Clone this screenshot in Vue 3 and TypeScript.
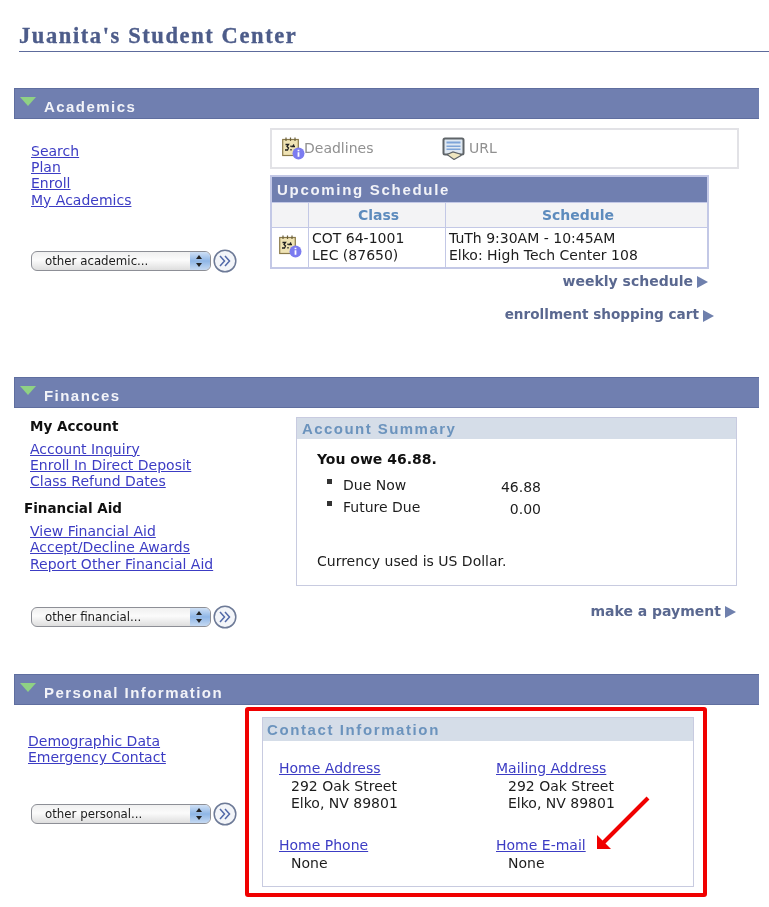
<script setup lang="ts">
const academicLinks: string[] = ['Search', 'Plan', 'Enroll', 'My Academics']
const accountLinks: string[] = ['Account Inquiry', 'Enroll In Direct Deposit', 'Class Refund Dates']
const aidLinks: string[] = ['View Financial Aid', 'Accept/Decline Awards', 'Report Other Financial Aid']
const personalLinks: string[] = ['Demographic Data', 'Emergency Contact']
</script>

<template>
  <div class="page">
    <svg class="defs" width="0" height="0" aria-hidden="true">
      <symbol id="cal" viewBox="0 0 23 23">
        <rect x="0.7" y="2.500" width="15.600" height="16" fill="#efe3b4" stroke="#8a7a4a" stroke-width="1.200" />
        <path d="M4 0.500v3.500M8.500 0.500v3.500M13 0.500v3.500" stroke="#6a5f3a" stroke-width="1.200" />
        <path d="M3.500 7.500h3l-1.500 2 1.500 1.500-1 2h-2.500M9 8.500v1.500M9 12v1.500M12 7.500l-1.500 2h2.500" fill="none" stroke="#222" stroke-width="1.300" />
        <circle cx="16.500" cy="16.500" r="6" fill="#7b7bf0" />
        <path d="M16.500 12.700v1.500M16.500 15.200v4.600" stroke="#fff" stroke-width="1.800" />
      </symbol>
      <symbol id="go" viewBox="0 0 24 24">
        <circle cx="12" cy="12" r="10.800" fill="#f3f5f9" stroke="#6d7a97" stroke-width="1.500" />
        <path d="M7 7l4.500 5-4.500 5M12 7l4.500 5-4.500 5" fill="none" stroke="#5269a8" stroke-width="1.500" />
      </symbol>
    </svg>

    <h1 class="title">Juanita's Student Center</h1>

    <section class="section academics">
      <h2 class="bar"><i class="tri"></i>Academics</h2>
      <div class="body">
        <div class="left">
          <nav class="links"><a v-for="l in academicLinks" :key="l" href="#">{{ l }}</a></nav>
          <div class="other">
            <span class="select"><span>other academic...</span><b class="stepper"></b></span>
            <svg class="go"><use href="#go" /></svg>
          </div>
        </div>
        <div class="right">
          <div class="tabs">
            <span class="tab deadlines"><svg class="cal"><use href="#cal" /></svg>Deadlines</span>
            <span class="tab url">
              <svg class="urlicon" viewBox="0 0 23 23">
                <rect x="1.500" y="1.500" width="20" height="16" rx="1.500" fill="#dfe8f2" stroke="#5f6468" stroke-width="2" />
                <path d="M4.500 4.500h14v2h-14zM4.500 8.500h14v1.500h-14zM4.500 11.500h14v1.500h-14z" fill="#7ea4d8" />
                <path d="M5 17.500l6-2.500 7 2 1 1.500-7 4z" fill="#efe6c0" stroke="#5f6468" stroke-width="1.200" />
              </svg>URL
            </span>
          </div>
          <div class="schedule">
            <div class="sched-title">Upcoming Schedule</div>
            <div class="row head">
              <span></span><span>Class</span><span>Schedule</span>
            </div>
            <div class="row data">
              <span class="iconcell"><svg class="cal"><use href="#cal" /></svg></span>
              <span>COT 64-1001<br />LEC (87650)</span>
              <span>TuTh 9:30AM - 10:45AM<br />Elko: High Tech Center 108</span>
            </div>
          </div>
          <a class="action weekly" href="#">weekly schedule<i class="play"></i></a>
          <a class="action cart" href="#">enrollment shopping cart<i class="play"></i></a>
        </div>
      </div>
    </section>

    <section class="section finances">
      <h2 class="bar"><i class="tri"></i>Finances</h2>
      <div class="body">
        <div class="left">
          <h3 class="sub first">My Account</h3>
          <nav class="links"><a v-for="l in accountLinks" :key="l" href="#">{{ l }}</a></nav>
          <h3 class="sub second">Financial Aid</h3>
          <nav class="links"><a v-for="l in aidLinks" :key="l" href="#">{{ l }}</a></nav>
          <div class="other">
            <span class="select"><span>other financial...</span><b class="stepper"></b></span>
            <svg class="go"><use href="#go" /></svg>
          </div>
        </div>
        <div class="right">
          <div class="card summary">
            <div class="card-head">Account Summary</div>
            <div class="summary-body">
              <strong>You owe 46.88.</strong>
              <div class="due"><i></i><span>Due Now</span><em>46.88</em></div>
              <div class="due"><i></i><span>Future Due</span><em>0.00</em></div>
              <p>Currency used is US Dollar.</p>
            </div>
          </div>
          <a class="action pay" href="#">make a payment<i class="play"></i></a>
        </div>
      </div>
    </section>

    <section class="section personal">
      <h2 class="bar"><i class="tri"></i>Personal Information</h2>
      <div class="body">
        <div class="left">
          <nav class="links"><a v-for="l in personalLinks" :key="l" href="#">{{ l }}</a></nav>
          <div class="other">
            <span class="select"><span>other personal...</span><b class="stepper"></b></span>
            <svg class="go"><use href="#go" /></svg>
          </div>
        </div>
        <div class="highlight">
          <div class="card contact">
            <div class="card-head">Contact Information</div>
            <div class="contact-grid">
              <div class="item addr"><a href="#">Home Address</a><p>292 Oak Street<br />Elko, NV 89801</p></div>
              <div class="item addr"><a href="#">Mailing Address</a><p>292 Oak Street<br />Elko, NV 89801</p></div>
              <div class="item"><a href="#">Home Phone</a><p>None</p></div>
              <div class="item"><a href="#">Home E-mail</a><p>None</p></div>
            </div>
          </div>
          <svg class="arrow" viewBox="0 0 60 60" width="60" height="60">
            <path d="M52 3L6 49" stroke="#f00000" stroke-width="4" fill="none" />
            <path d="M1 54V40l14 14z" fill="#f00000" />
          </svg>
        </div>
      </div>
    </section>
  </div>
</template>

<style scoped>
.page {
  width: 769px;
  height: 907px;
  overflow: hidden;
  position: relative;
  background: #fff;
  color: #1c1c1c;
  font-family: "DejaVu Sans", sans-serif;
  font-size: 14px;
  line-height: 16.4px;
  filter: blur(0.35px);
}
.defs { position: absolute; }
.title {
  margin: 0 0 36px 19px;
  height: 52px;
  box-sizing: border-box;
  padding-top: 24px;
  border-bottom: 1.5px solid #5d6b9c;
  font-family: "Liberation Serif", serif;
  font-size: 22.5px;
  line-height: 24px;
  font-weight: 700;
  letter-spacing: 1.6px;
  color: #4d5c8a;
  -webkit-text-stroke: 0.35px #4d5c8a;
}
.section { margin-left: 14px; width: 745px; }
.academics { height: 289px; }
.finances { height: 297px; }
.bar {
  position: relative;
  margin: 0;
  height: 31px;
  box-sizing: border-box;
  padding: 9px 0 0 29px;
  background: #707fb0;
  border-top: 1px solid #5f6e9f;
  border-left: 1px solid #5f6e9f;
  border-bottom: 1px solid #5f6e9f;
  font-family: "Liberation Sans", sans-serif;
  font-size: 15px;
  line-height: 18px;
  font-weight: 700;
  letter-spacing: 1.45px;
  color: #f2f3f8;
}
.tri {
  position: absolute;
  left: 5px;
  top: 8px;
  border-left: 8px solid transparent;
  border-right: 8px solid transparent;
  border-top: 9px solid #8fd184;
}
.body { display: flex; }
.left { width: 231px; flex: none; }
.links { display: flex; flex-direction: column; align-items: flex-start; }
.links a, .item a { color: #3c3cc4; text-decoration: underline; }
.academics .links { padding: 23.5px 0 0 17px; }
.other { display: flex; align-items: center; margin-left: 17px; }
.academics .other { margin-top: 40.5px; }
.finances .other { margin-top: 33px; }
.personal .other { margin-top: 36px; }
.select {
  display: flex;
  justify-content: space-between;
  width: 180px;
  height: 20px;
  box-sizing: border-box;
  border: 1px solid #8d8f96;
  border-radius: 6px;
  background: linear-gradient(#f0f0f0, #fbfbfb 45%, #dedede);
  padding-left: 13px;
  font-size: 11.8px;
  line-height: 18px;
  overflow: hidden;
}
.stepper {
  position: relative;
  width: 20px;
  background: linear-gradient(#cfe0f5, #8fb6e6 50%, #c5d9f2);
}
.stepper::before, .stepper::after {
  content: "";
  position: absolute;
  left: 6px;
  border-left: 3.5px solid transparent;
  border-right: 3.5px solid transparent;
}
.stepper::before { top: 3px; border-bottom: 4px solid #222; }
.stepper::after { bottom: 3px; border-top: 4px solid #222; }
.go { width: 24px; height: 24px; margin-left: 2px; flex: none; }
.right { width: 470px; margin-left: 25px; flex: none; }
.tabs {
  display: flex;
  width: 469px;
  height: 41px;
  box-sizing: border-box;
  margin-top: 9px;
  border: 2px solid #e2e2e6;
  align-items: center;
  color: #909090;
}
.tab { display: flex; align-items: center; }
.deadlines { padding-left: 10px; width: 170px; box-sizing: border-box; }
.deadlines .cal { margin-right: -1px; }
.cal { width: 23px; height: 23px; flex: none; }
.urlicon { width: 23px; height: 23px; margin-right: 4px; }
.schedule {
  width: 439px;
  margin-top: 6px;
  box-sizing: border-box;
  border: 2px solid #c3c8e6;
}
.sched-title {
  height: 25px;
  box-sizing: border-box;
  background: #707fb0;
  padding: 4px 0 0 5px;
  font-family: "Liberation Sans", sans-serif;
  font-size: 15px;
  line-height: 17px;
  font-weight: 700;
  letter-spacing: 1.7px;
  color: #f2f3f8;
}
.row { display: grid; grid-template-columns: 36px 136px 1fr; gap: 1px; background: #c3c8e6; padding-top: 1px; }
.row span { background: #fff; padding-left: 3px; }
.head span {
  height: 24px;
  background: #f3f3f5;
  font-weight: 700;
  text-align: center;
  line-height: 24px;
  color: #5d8bbd;
  font-size: 14px;
}
.data span { height: 39px; padding-top: 2px; box-sizing: border-box; line-height: 16.8px; }
.data .iconcell { padding: 7px 0 0 7px; }
.action {
  display: flex;
  justify-content: flex-end;
  align-items: center;
  color: #5a6890;
  font-weight: 700;
  text-decoration: none;
  font-family: "DejaVu Sans", sans-serif;
  font-size: 14px;
}
.play {
  margin-left: 4px;
  margin-top: 2px;
  border-top: 6px solid transparent;
  border-bottom: 6px solid transparent;
  border-left: 11px solid #6f80ad;
}
.weekly { width: 438px; margin-top: 4px; }
.cart { width: 444px; margin-top: 17px; font-size: 13.6px; }
.sub { margin: 0; font-size: 13.5px; color: #111; font-weight: 700; line-height: 18px; }
.sub.first { padding: 9px 0 0 16px; margin-bottom: 5.5px; }
.sub.second { padding: 9px 0 0 10px; margin-bottom: 6px; }
.finances .links { padding-left: 16px; }
.card { border: 1px solid #c8cbe0; box-sizing: border-box; }
.card-head {
  background: #d5dde8;
  padding-left: 5px;
  font-family: "Liberation Sans", sans-serif;
  font-weight: 700;
  font-size: 15px;
  letter-spacing: 1.45px;
  color: #6b93bd;
}
.summary { width: 441px; height: 169px; margin: 9px 0 0 26px; border-width: 1.5px; }
.finances .right { margin-left: 25px; }
.summary .card-head { height: 21px; line-height: 22px; }
.summary-body { padding: 11px 0 0 20px; }
.summary-body strong { display: block; color: #111; line-height: 18px; margin-bottom: 3px; }
.due { display: flex; position: relative; height: 22px; align-items: flex-end; padding-left: 26px; }
.due i { position: absolute; left: 10px; top: 8px; width: 5px; height: 5px; background: #333; }
.due span { width: 133px; }
.due em { width: 65px; text-align: right; font-style: normal; position: relative; top: 2px; }
.summary-body p { margin: 38px 0 0; }
.pay { width: 466px; margin-top: 17px; }
.personal .links { padding: 28px 0 0 14px; }
.highlight {
  position: relative;
  box-sizing: border-box;
  width: 462px;
  height: 190px;
  margin: 2px 0 0 0;
  border: 4px solid #f00000;
  border-radius: 3px;
  padding: 6px 0 0 13px;
}
.contact { width: 432px; height: 170px; border-width: 1.5px; }
.contact .card-head { height: 23px; line-height: 24px; letter-spacing: 1.6px; padding-left: 4px; }
.contact-grid { display: grid; grid-template-columns: 217px 1fr; padding: 19px 0 0 16px; }
.item { display: flex; flex-direction: column; align-items: flex-start; }
.item p { margin: 2px 0 0 12px; color: #1c1c1c; line-height: 17px; }
.addr { height: 77px; }
.arrow { position: absolute; left: 347px; top: 84px; }
</style>
